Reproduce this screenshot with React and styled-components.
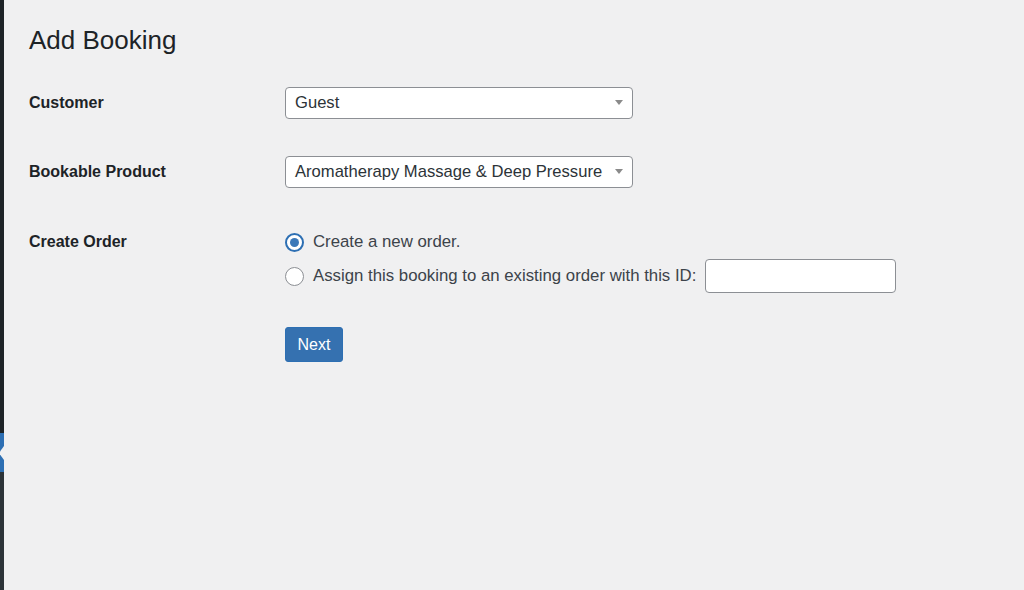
import styled, { createGlobalStyle } from "styled-components";

const GlobalStyle = createGlobalStyle`
  html, body {
    margin: 0;
    padding: 0;
    background: #f0f0f1;
  }
  body {
    font-family: "Liberation Sans", Arial, sans-serif;
    color: #1d2327;
  }
`;

const Page = styled.div`
  display: flex;
  width: 1024px;
  height: 590px;
  overflow: hidden;
  background: #f0f0f1;
`;

const SideEdge = styled.div`
  width: 4px;
  flex: none;
  display: flex;
  flex-direction: column;
  background: #2c3338;

  .top {
    height: 433px;
    background: #1d2327;
  }
  .current {
    position: relative;
    height: 39px;
    background: #2d6fb3;
  }
  .current::after {
    content: "";
    position: absolute;
    right: 0;
    top: 13px;
    border-top: 7px solid transparent;
    border-bottom: 7px solid transparent;
    border-right: 5px solid #f0f0f1;
  }
`;

const Content = styled.div`
  flex: 1;
  padding: 23px 0 0 25px;
`;

const Title = styled.h1`
  margin: 0 0 30px;
  font-size: 26px;
  font-weight: 400;
  line-height: 34px;
  color: #1d2327;
`;

const Form = styled.div`
  display: grid;
  grid-template-columns: 256px 1fr;
  row-gap: 37px;
  align-items: start;
`;

const Label = styled.div`
  font-size: 16px;
  font-weight: 700;
  color: #1d2327;
  padding-top: ${(p) => p.$top || 7}px;
`;

const Select = styled.div`
  position: relative;
  box-sizing: border-box;
  width: 348px;
  height: 32px;
  padding: 0 30px 0 9px;
  display: flex;
  align-items: center;
  background: #fff;
  border: 1px solid #8c8f94;
  border-radius: 4px;
  font-size: 16.6px;
  color: #2c3338;
  white-space: nowrap;

  &::after {
    content: "";
    position: absolute;
    right: 9px;
    top: 12px;
    border-left: 4px solid transparent;
    border-right: 4px solid transparent;
    border-top: 5px solid #8a8a8a;
  }
`;

const Options = styled.div`
  display: flex;
  flex-direction: column;
  gap: 4px;
  padding-top: 2px;
`;

const Option = styled.label`
  display: flex;
  align-items: center;
  gap: 9px;
  height: 30px;
  font-size: 16.8px;
  color: #3c434a;
  white-space: nowrap;
`;

const Radio = styled.span`
  box-sizing: border-box;
  flex: none;
  width: 19px;
  height: 19px;
  border-radius: 50%;
  background: #fff;
  border: ${(p) => (p.$checked ? "2px solid #2d6fb3" : "1px solid #8c8f94")};
  display: flex;
  align-items: center;
  justify-content: center;

  &::before {
    content: "";
    display: ${(p) => (p.$checked ? "block" : "none")};
    width: 9px;
    height: 9px;
    border-radius: 50%;
    background: #3b78b8;
  }
`;

const IdInput = styled.span`
  box-sizing: border-box;
  flex: none;
  display: inline-block;
  width: 191px;
  height: 34px;
  margin-left: 0;
  background: #fff;
  border: 1px solid #8c8f94;
  border-radius: 4px;
`;

const Actions = styled.div`
  margin-top: 30px;
`;

const Button = styled.button`
  margin-top: 2px;
  width: 58px;
  height: 35px;
  border: 1px solid #2d6fb3;
  border-radius: 3px;
  background: #3571b0;
  color: #fff;
  font-family: inherit;
  font-size: 16px;
  padding: 0;
`;

export default function App() {
  return (
    <Page>
      <GlobalStyle />
      <SideEdge>
        <div className="top" />
        <div className="current" />
      </SideEdge>
      <Content>
        <Title>Add Booking</Title>
        <Form>
          <Label>Customer</Label>
          <Select>Guest</Select>

          <Label>Bookable Product</Label>
          <Select>Aromatherapy Massage &amp; Deep Pressure</Select>

          <Label $top={8}>Create Order</Label>
          <Options>
            <Option>
              <Radio $checked />
              Create a new order.
            </Option>
            <Option>
              <Radio />
              Assign this booking to an existing order with this ID:
              <IdInput />
            </Option>
            <Actions>
              <Button>Next</Button>
            </Actions>
          </Options>
        </Form>
      </Content>
    </Page>
  );
}
